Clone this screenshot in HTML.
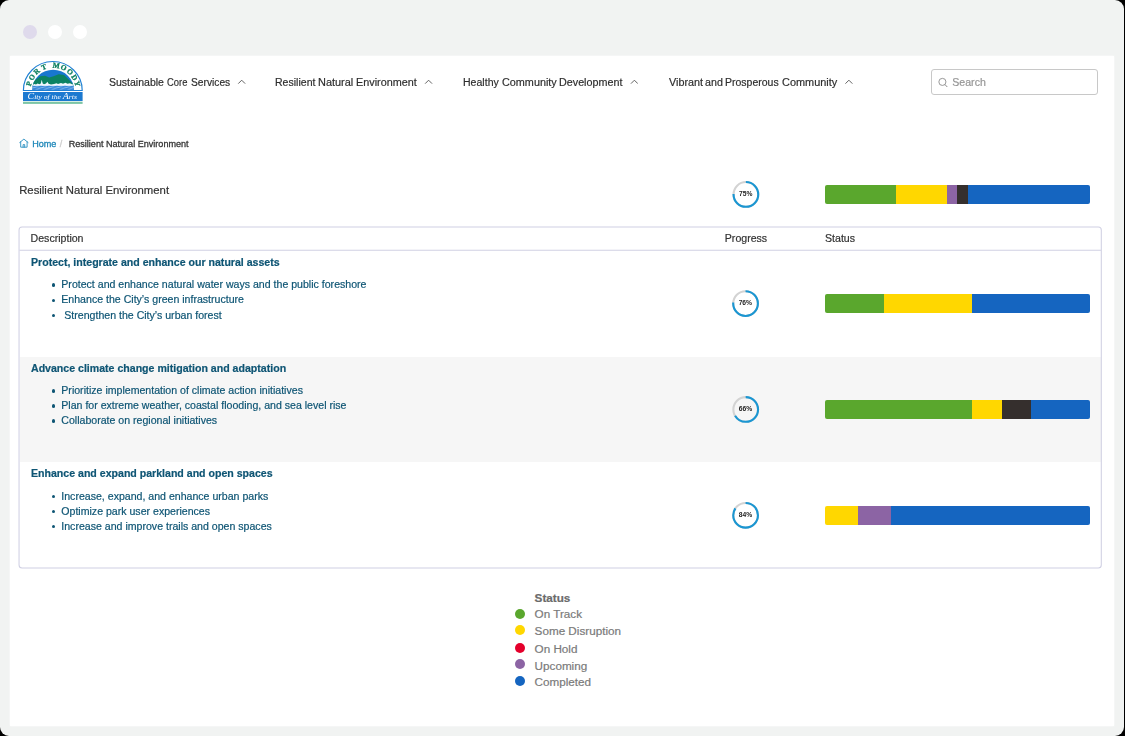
<!DOCTYPE html>
<html>
<head>
<meta charset="utf-8">
<title>Resilient Natural Environment</title>
<style>
html,body{margin:0;padding:0;}
body{width:1125px;height:736px;overflow:hidden;background:#000;font-family:"Liberation Sans",sans-serif;position:relative;}
#root{position:absolute;left:0;top:0;width:1125px;height:736px;will-change:transform;}
.abs{position:absolute;}
#frame{position:absolute;left:0;top:0;width:1124px;height:736px;background:#f1f3f2;border-radius:9px;}
.dot{position:absolute;width:14px;height:14px;border-radius:50%;background:#fff;top:24.7px;filter:blur(0.45px);}
#page{position:absolute;left:10px;top:56px;width:1104px;height:670px;background:#fff;box-shadow:0 0 2px rgba(255,255,255,0.9);}
.t{position:absolute;white-space:nowrap;line-height:1;transform-origin:0 0;-webkit-text-stroke:0.2px;}
.nav{font-size:11.7px;color:#2e2e2e;top:75.6px;}
.chev{position:absolute;top:79px;width:9px;height:6px;}
.bc{font-size:9.07px;top:139.6px;-webkit-text-stroke:0.28px;}
.hd{font-size:10.58px;color:#333;top:233.4px;}
.ttl{font-size:10.58px;font-weight:bold;color:#0e5574;left:31px;}
.li{font-size:10.58px;color:#0e5574;left:61.3px;}
.bl{position:absolute;left:52px;margin-top:-0.4px;width:3.4px;height:3.4px;border-radius:50%;background:#0e5574;}
.bar{position:absolute;left:824.7px;width:265.3px;height:19.2px;border-radius:2px;overflow:hidden;display:flex;}
.bar i{display:block;height:100%;}
.g{background:#5aa72d;}.y{background:#ffd700;}.p{background:#8c64a4;}.k{background:#352f2d;}.b{background:#1565c0;}
.pc{position:absolute;width:34px;height:34px;}
.pt{position:absolute;width:30px;text-align:center;font-size:7.4px;font-weight:bold;color:#222;line-height:1;}
.lg{font-size:11.7px;color:#7a7a7a;left:4.6px;}
.ld{position:absolute;left:515px;width:10px;height:10px;border-radius:50%;}
</style>
</head>
<body>
<div id="root">
<div id="frame"></div>
<div class="dot" style="left:23.2px;background:#dfdaec;"></div>
<div class="dot" style="left:48.1px;"></div>
<div class="dot" style="left:73.3px;"></div>
<div id="page"></div>

<!-- LOGO -->
<svg class="abs" style="left:22px;top:60px;" width="62" height="46" viewBox="22 60 62 46">
  <defs>
    <clipPath id="inner"><path d="M32.2 90 A20.9 20.3 0 0 1 74 90 Z"/></clipPath>
  </defs>
  <path d="M23.4 90.5 A29.4 29.0 0 0 1 82.2 90.5 Z" fill="#fff" stroke="#1f80d4" stroke-width="1.15"/>
  <g clip-path="url(#inner)">
    <rect x="32" y="69" width="43" height="22" fill="#1877cf"/>
    <path d="M32 83 L34.6 80.4 L40.4 76.3 L45.1 75.8 L49.2 77.4 L53.5 76.3 L58.7 74.3 L64.1 75 L70.2 81 L75 86 L75 91 L32 91 Z" fill="#0c8262"/>
    <path d="M32 85 L34.5 84 L36 84.4 L37.5 83.4 L39.5 84.2 L40.8 83.4 L41.7 79.8 L42.7 83.4 L44 84.2 L46 83.6 L47.4 81.8 L48.6 83.8 L51 84.4 L54 84 L56.5 83.2 L58 84 L61 83 L63 83.8 L65.5 82.8 L67.5 83.7 L70 83.2 L72 84.2 L75 84.8 L75 91 L32 91 Z" fill="#f1f7fd"/>
    <rect x="32" y="85.8" width="43" height="5" fill="#86bbec"/>
    <path d="M31 86.7 Q33 85.8 35 86.7 T39 86.7 T43 86.7 T47 86.7 T51 86.7 T55 86.7 T59 86.7 T63 86.7 T67 86.7 T71 86.7 T75 86.7" fill="none" stroke="#3585d8" stroke-width="1"/>
    <path d="M29 88.2 Q31 87.3 33 88.2 T37 88.2 T41 88.2 T45 88.2 T49 88.2 T53 88.2 T57 88.2 T61 88.2 T65 88.2 T69 88.2 T73 88.2 T77 88.2" fill="none" stroke="#3585d8" stroke-width="1"/>
    <path d="M31 89.7 Q33 88.9 35 89.7 T39 89.7 T43 89.7 T47 89.7 T51 89.7 T55 89.7 T59 89.7 T63 89.7 T67 89.7 T71 89.7 T75 89.7" fill="none" stroke="#3585d8" stroke-width="1"/>
  </g>
  <g font-family="Liberation Serif, serif" font-weight="bold" font-size="7.4" fill="#0c7f5f" stroke="#0c7f5f" stroke-width="0.3" text-anchor="middle"><text transform="rotate(-74.7 53.1 90.2)" x="53.1" y="67.70">P</text><text transform="rotate(-58.6 53.1 90.2)" x="53.1" y="67.70">O</text><text transform="rotate(-40.8 53.1 90.2)" x="53.1" y="67.70">R</text><text transform="rotate(-21.8 53.1 90.2)" x="53.1" y="67.70">T</text><text transform="rotate(7.5 53.1 90.2)" x="53.1" y="67.70">M</text><text transform="rotate(25.1 53.1 90.2)" x="53.1" y="67.70">O</text><text transform="rotate(42.5 53.1 90.2)" x="53.1" y="67.70">O</text><text transform="rotate(59.4 53.1 90.2)" x="53.1" y="67.70">D</text><text transform="rotate(75.2 53.1 90.2)" x="53.1" y="67.70">Y</text></g>
  <rect x="23" y="92" width="59.6" height="9" fill="#1c79d0"/>
  <rect x="23" y="101.7" width="59.6" height="2.2" fill="#7cc5a6"/>
  <text x="27.6" y="99.1" font-family="Liberation Serif, serif" font-style="italic" font-size="6.6" fill="#fff" textLength="49.3" lengthAdjust="spacingAndGlyphs"><tspan font-size="8.6">C</tspan>ity of the <tspan font-size="8.6">A</tspan>rts</text>
</svg>

<!-- NAV -->
<span class="t nav" style="left:109.04px;transform:scaleX(0.8990);">Sustainable</span>
<span class="t nav" style="left:166.90px;transform:scaleX(0.8041);">Core</span>
<span class="t nav" style="left:191.05px;transform:scaleX(0.8756);">Services</span>
<span class="t nav" style="left:275.28px;transform:scaleX(0.9025);">Resilient</span>
<span class="t nav" style="left:318.35px;transform:scaleX(0.9366);">Natural</span>
<span class="t nav" style="left:356.16px;transform:scaleX(0.9260);">Environment</span>
<span class="t nav" style="left:462.68px;transform:scaleX(0.9026);">Healthy</span>
<span class="t nav" style="left:501.84px;transform:scaleX(0.9269);">Community</span>
<span class="t nav" style="left:559.46px;transform:scaleX(0.9208);">Development</span>
<span class="t nav" style="left:668.59px;transform:scaleX(0.9243);">Vibrant</span>
<span class="t nav" style="left:705.33px;transform:scaleX(0.9135);">and</span>
<span class="t nav" style="left:725.38px;transform:scaleX(0.8978);">Prosperous</span>
<span class="t nav" style="left:781.83px;transform:scaleX(0.9337);">Community</span>
<svg class="chev" style="left:237px" viewBox="0 0 9 6"><path d="M1.25 4.65 L4.70 1.2 L8.15 4.65" fill="none" stroke="#5a5a5a" stroke-width="0.95"/></svg>
<svg class="chev" style="left:424px" viewBox="0 0 9 6"><path d="M1.15 4.65 L4.60 1.2 L8.05 4.65" fill="none" stroke="#5a5a5a" stroke-width="0.95"/></svg>
<svg class="chev" style="left:629px" viewBox="0 0 9 6"><path d="M1.95 4.65 L5.40 1.2 L8.85 4.65" fill="none" stroke="#5a5a5a" stroke-width="0.95"/></svg>
<svg class="chev" style="left:844px" viewBox="0 0 9 6"><path d="M1.45 4.65 L4.90 1.2 L8.35 4.65" fill="none" stroke="#5a5a5a" stroke-width="0.95"/></svg>

<!-- SEARCH -->
<div class="abs" style="left:931px;top:69px;width:164.5px;height:24.4px;border:1px solid #c8c8c8;border-radius:3px;background:#fff;"></div>
<svg class="abs" style="left:937px;top:76px;" width="12" height="12" viewBox="0 0 12 12"><circle cx="5.4" cy="5.9" r="3.55" fill="none" stroke="#8c8c8c" stroke-width="0.9"/><path d="M7.9 8.5 L10.3 11" stroke="#8c8c8c" stroke-width="1" fill="none"/></svg>
<span class="t" style="left:952.3px;top:76.8px;font-size:10.58px;color:#969696;">Search</span>

<!-- BREADCRUMB -->
<svg class="abs" style="left:19px;top:138px;" width="10" height="10" viewBox="0 0 10 10"><path d="M0.7 4.5 L4.9 1.1 L9.1 4.5 M1.7 3.9 L1.7 9.2 L8.1 9.2 L8.1 3.9 M4.1 9.2 L4.1 6.6 L5.7 6.6 L5.7 9.2" fill="none" stroke="#2a90c2" stroke-width="0.9" stroke-linejoin="round" stroke-linecap="round"/></svg>
<span class="t bc" style="left:32.2px;color:#1c86b8;">Home</span>
<span class="t bc" style="left:59.8px;color:#ccc;">/</span>
<span class="t bc" style="left:68.7px;color:#333;">Resilient Natural Environment</span>

<!-- HEADING -->
<span class="t" style="left:19.2px;top:185.2px;font-size:11.34px;color:#333;">Resilient Natural Environment</span>

<!-- TABLE -->
<div class="abs" style="left:20px;top:356.5px;width:1081px;height:105.6px;background:#f6f6f6;"></div>
<svg class="abs" style="left:15px;top:223px;" width="1095" height="350" viewBox="15 223 1095 350"><rect x="19.05" y="226.95" width="1082.25" height="340.95" rx="3" ry="3" fill="none" stroke="#d0d0e3" stroke-width="1.05"/><path d="M19.5 250.3 H1101" stroke="#d0d0e3" stroke-width="1.05" fill="none"/></svg>
<span class="t hd" style="left:30.6px;">Description</span>
<span class="t hd" style="left:724.8px;">Progress</span>
<span class="t hd" style="left:825px;">Status</span>

<!-- ROW 1 -->
<span class="t ttl" style="top:256.9px;">Protect, integrate and enhance our natural assets</span>
<i class="bl" style="top:283.8px"></i><span class="t li" style="top:279.3px;">Protect and enhance natural water ways and the public foreshore</span>
<i class="bl" style="top:298.9px"></i><span class="t li" style="top:294.4px;">Enhance the City’s green infrastructure</span>
<i class="bl" style="top:314px"></i><span class="t li" style="top:309.5px;left:64.3px;">Strengthen the City’s urban forest</span>

<!-- ROW 2 -->
<span class="t ttl" style="top:362.6px;">Advance climate change mitigation and adaptation</span>
<i class="bl" style="top:389.5px"></i><span class="t li" style="top:385px;">Prioritize implementation of climate action initiatives</span>
<i class="bl" style="top:404.6px"></i><span class="t li" style="top:400.1px;">Plan for extreme weather, coastal flooding, and sea level rise</span>
<i class="bl" style="top:419.7px"></i><span class="t li" style="top:415.2px;">Collaborate on regional initiatives</span>

<!-- ROW 3 -->
<span class="t ttl" style="top:468.3px;">Enhance and expand parkland and open spaces</span>
<i class="bl" style="top:495.2px"></i><span class="t li" style="top:490.7px;">Increase, expand, and enhance urban parks</span>
<i class="bl" style="top:510.3px"></i><span class="t li" style="top:505.8px;">Optimize park user experiences</span>
<i class="bl" style="top:525.4px"></i><span class="t li" style="top:520.9px;">Increase and improve trails and open spaces</span>

<!-- BARS -->
<div class="bar" style="top:185px;"><i class="g" style="width:26.92%"></i><i class="y" style="width:19.23%"></i><i class="p" style="width:3.85%"></i><i class="k" style="width:3.85%"></i><i class="b" style="flex:1"></i></div>
<div class="bar" style="top:294.1px;"><i class="g" style="width:22.22%"></i><i class="y" style="width:33.33%"></i><i class="b" style="flex:1"></i></div>
<div class="bar" style="top:399.9px;"><i class="g" style="width:55.56%"></i><i class="y" style="width:11.11%"></i><i class="k" style="width:11.11%"></i><i class="b" style="flex:1"></i></div>
<div class="bar" style="top:505.7px;"><i class="y" style="width:12.5%"></i><i class="p" style="width:12.5%"></i><i class="b" style="flex:1"></i></div>

<!-- PROGRESS CIRCLES -->
<svg class="pc" style="left:729px;top:178px;" width="34" height="34" viewBox="0 0 34 34"><circle cx="16.90" cy="16.40" r="12.35" fill="none" stroke="#d3d3d3" stroke-width="2.1"/><circle cx="16.90" cy="16.40" r="12.35" fill="none" stroke="#1a96d2" stroke-width="2.1" stroke-dasharray="58.20 77.60" transform="rotate(-90 16.90 16.40)"/><text x="16.70" y="18.20" text-anchor="middle" font-family="Liberation Sans, sans-serif" font-weight="bold" font-size="7.5" fill="#222" textLength="13.4" lengthAdjust="spacingAndGlyphs">75%</text></svg>
<svg class="pc" style="left:729px;top:287px;" width="34" height="34" viewBox="0 0 34 34"><circle cx="16.55" cy="16.60" r="12.35" fill="none" stroke="#d3d3d3" stroke-width="2.1"/><circle cx="16.55" cy="16.60" r="12.35" fill="none" stroke="#1a96d2" stroke-width="2.1" stroke-dasharray="58.97 77.60" transform="rotate(-90 16.55 16.60)"/><text x="16.35" y="18.40" text-anchor="middle" font-family="Liberation Sans, sans-serif" font-weight="bold" font-size="7.5" fill="#222" textLength="13.4" lengthAdjust="spacingAndGlyphs">76%</text></svg>
<svg class="pc" style="left:729px;top:393px;" width="34" height="34" viewBox="0 0 34 34"><circle cx="16.70" cy="16.45" r="12.35" fill="none" stroke="#d3d3d3" stroke-width="2.1"/><circle cx="16.70" cy="16.45" r="12.35" fill="none" stroke="#1a96d2" stroke-width="2.1" stroke-dasharray="51.21 77.60" transform="rotate(-90 16.70 16.45)"/><text x="16.50" y="18.25" text-anchor="middle" font-family="Liberation Sans, sans-serif" font-weight="bold" font-size="7.5" fill="#222" textLength="13.4" lengthAdjust="spacingAndGlyphs">66%</text></svg>
<svg class="pc" style="left:729px;top:499px;" width="34" height="34" viewBox="0 0 34 34"><circle cx="16.60" cy="16.30" r="12.35" fill="none" stroke="#d3d3d3" stroke-width="2.1"/><circle cx="16.60" cy="16.30" r="12.35" fill="none" stroke="#1a96d2" stroke-width="2.1" stroke-dasharray="65.18 77.60" transform="rotate(-90 16.60 16.30)"/><text x="16.40" y="18.10" text-anchor="middle" font-family="Liberation Sans, sans-serif" font-weight="bold" font-size="7.5" fill="#222" textLength="13.4" lengthAdjust="spacingAndGlyphs">84%</text></svg>

<!-- LEGEND -->
<i class="ld g" style="top:608.8px"></i>
<i class="ld y" style="top:625.3px"></i>
<i class="ld" style="top:642.9px;background:#e4002b;"></i>
<i class="ld p" style="top:659.3px"></i>
<i class="ld b" style="top:676px"></i>
</div>
<div id="legtxt" style="position:absolute;left:530px;top:588px;width:120px;height:104px;background:#fff;">
<span class="t lg" style="top:4.4px;font-weight:bold;color:#6b6b6b;">Status</span>
<span class="t lg" style="top:20.4px;">On Track</span>
<span class="t lg" style="top:37.0px;">Some Disruption</span>
<span class="t lg" style="top:55px;">On Hold</span>
<span class="t lg" style="top:71.6px;">Upcoming</span>
<span class="t lg" style="top:87.8px;">Completed</span>
</div>

</body>
</html>
